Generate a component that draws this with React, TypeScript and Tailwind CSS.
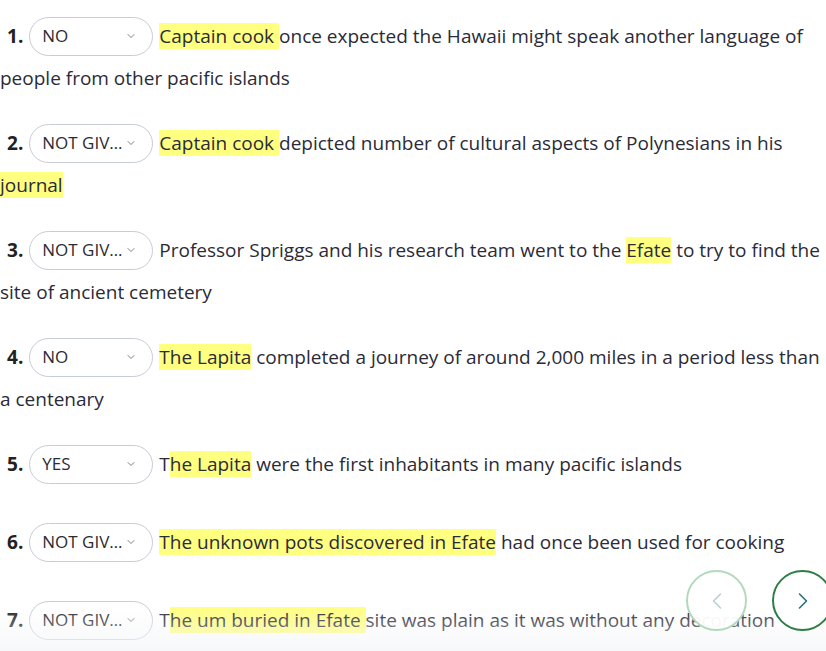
import { ChevronDown, ChevronLeft, ChevronRight } from 'lucide-react';

type Part = { t: string; hl?: boolean };

const items: { n: number; answer: string; lines: Part[][] }[] = [
  {
    n: 1,
    answer: 'NO',
    lines: [
      [{ t: 'Captain cook ', hl: true }, { t: 'once expected the Hawaii might speak another language of' }],
      [{ t: 'people from other pacific islands' }],
    ],
  },
  {
    n: 2,
    answer: 'NOT GIVEN',
    lines: [
      [{ t: 'Captain cook ', hl: true }, { t: 'depicted number of cultural aspects of Polynesians in his' }],
      [{ t: 'journal', hl: true }],
    ],
  },
  {
    n: 3,
    answer: 'NOT GIVEN',
    lines: [
      [
        { t: 'Professor Spriggs and his research team went to the ' },
        { t: 'Efate', hl: true },
        { t: ' to try to find the' },
      ],
      [{ t: 'site of ancient cemetery' }],
    ],
  },
  {
    n: 4,
    answer: 'NO',
    lines: [
      [{ t: 'The Lapita', hl: true }, { t: ' completed a journey of around 2,000 miles in a period less than' }],
      [{ t: 'a centenary' }],
    ],
  },
  {
    n: 5,
    answer: 'YES',
    lines: [[{ t: 'T' }, { t: 'he Lapita', hl: true }, { t: ' were the first inhabitants in many pacific islands' }]],
  },
  {
    n: 6,
    answer: 'NOT GIVEN',
    lines: [[{ t: 'The unknown pots discovered in Efate', hl: true }, { t: ' had once been used for cooking' }]],
  },
  {
    n: 7,
    answer: 'NOT GIVEN',
    lines: [
      [{ t: 'T' }, { t: 'he um buried in Efate ', hl: true }, { t: 'site was plain as it was without any decoration' }],
    ],
  },
];

const Select = ({ value }: { value: string }) => (
  <span className="inline-flex items-center justify-between w-[124px] h-[39px] mx-[6px] pl-[12px] pr-[15px] rounded-full border border-[#c8ccd6] bg-white text-[17px] leading-normal text-[#2b2b33]">
    <span className="truncate max-w-[84px]">{value}</span>
    <ChevronDown className="h-[12px] w-[12px] text-[#555] shrink-0" strokeWidth={1.5} />
  </span>
);

const Line = ({ parts }: { parts: Part[] }) => (
  <span className="whitespace-pre">
    {parts.map((p, j) => (
      <span key={j} className={p.hl ? 'bg-[#ffff80]' : ''}>
        {p.t}
      </span>
    ))}
  </span>
);

export default function App() {
  return (
    <div
      className="relative w-[826px] h-[651px] overflow-hidden bg-white text-[#2b2b38]"
      style={{ fontFamily: '"Open Sans", "Noto Sans", sans-serif' }}
    >
      <div className="pt-[15px]">
        {items.map((item) => (
          <div key={item.n} className="min-h-[55px] mb-[23px] text-[19px] leading-[42px] whitespace-nowrap">
            {item.lines.map((line, i) =>
              i === 0 ? (
                <div key={i} className="flex items-center h-[42px]">
                  <span className="ml-[7px] font-bold text-[#222]">{item.n}.</span>
                  <Select value={item.answer} />
                  <Line parts={line} />
                </div>
              ) : (
                <div key={i} className="h-[42px]">
                  <Line parts={line} />
                </div>
              )
            )}
          </div>
        ))}
      </div>

      <div className="absolute left-0 right-0 bottom-0 h-[45px] bg-gradient-to-b from-transparent to-[#f4f5f7]/70" />

      <button className="absolute left-[686px] top-[570px] w-[61px] h-[61px] rounded-full border-2 border-[#b3d9bd] bg-white/95 flex items-center justify-center">
        <ChevronLeft className="h-[28px] w-[28px] text-[#b9cfd6]" strokeWidth={1.4} />
      </button>
      <button className="absolute left-[772px] top-[570px] w-[61px] h-[61px] rounded-full border-2 border-[#2f7d46] bg-white flex items-center justify-center">
        <ChevronRight className="h-[28px] w-[28px] text-[#2a6f80]" strokeWidth={1.4} />
      </button>
    </div>
  );
}
